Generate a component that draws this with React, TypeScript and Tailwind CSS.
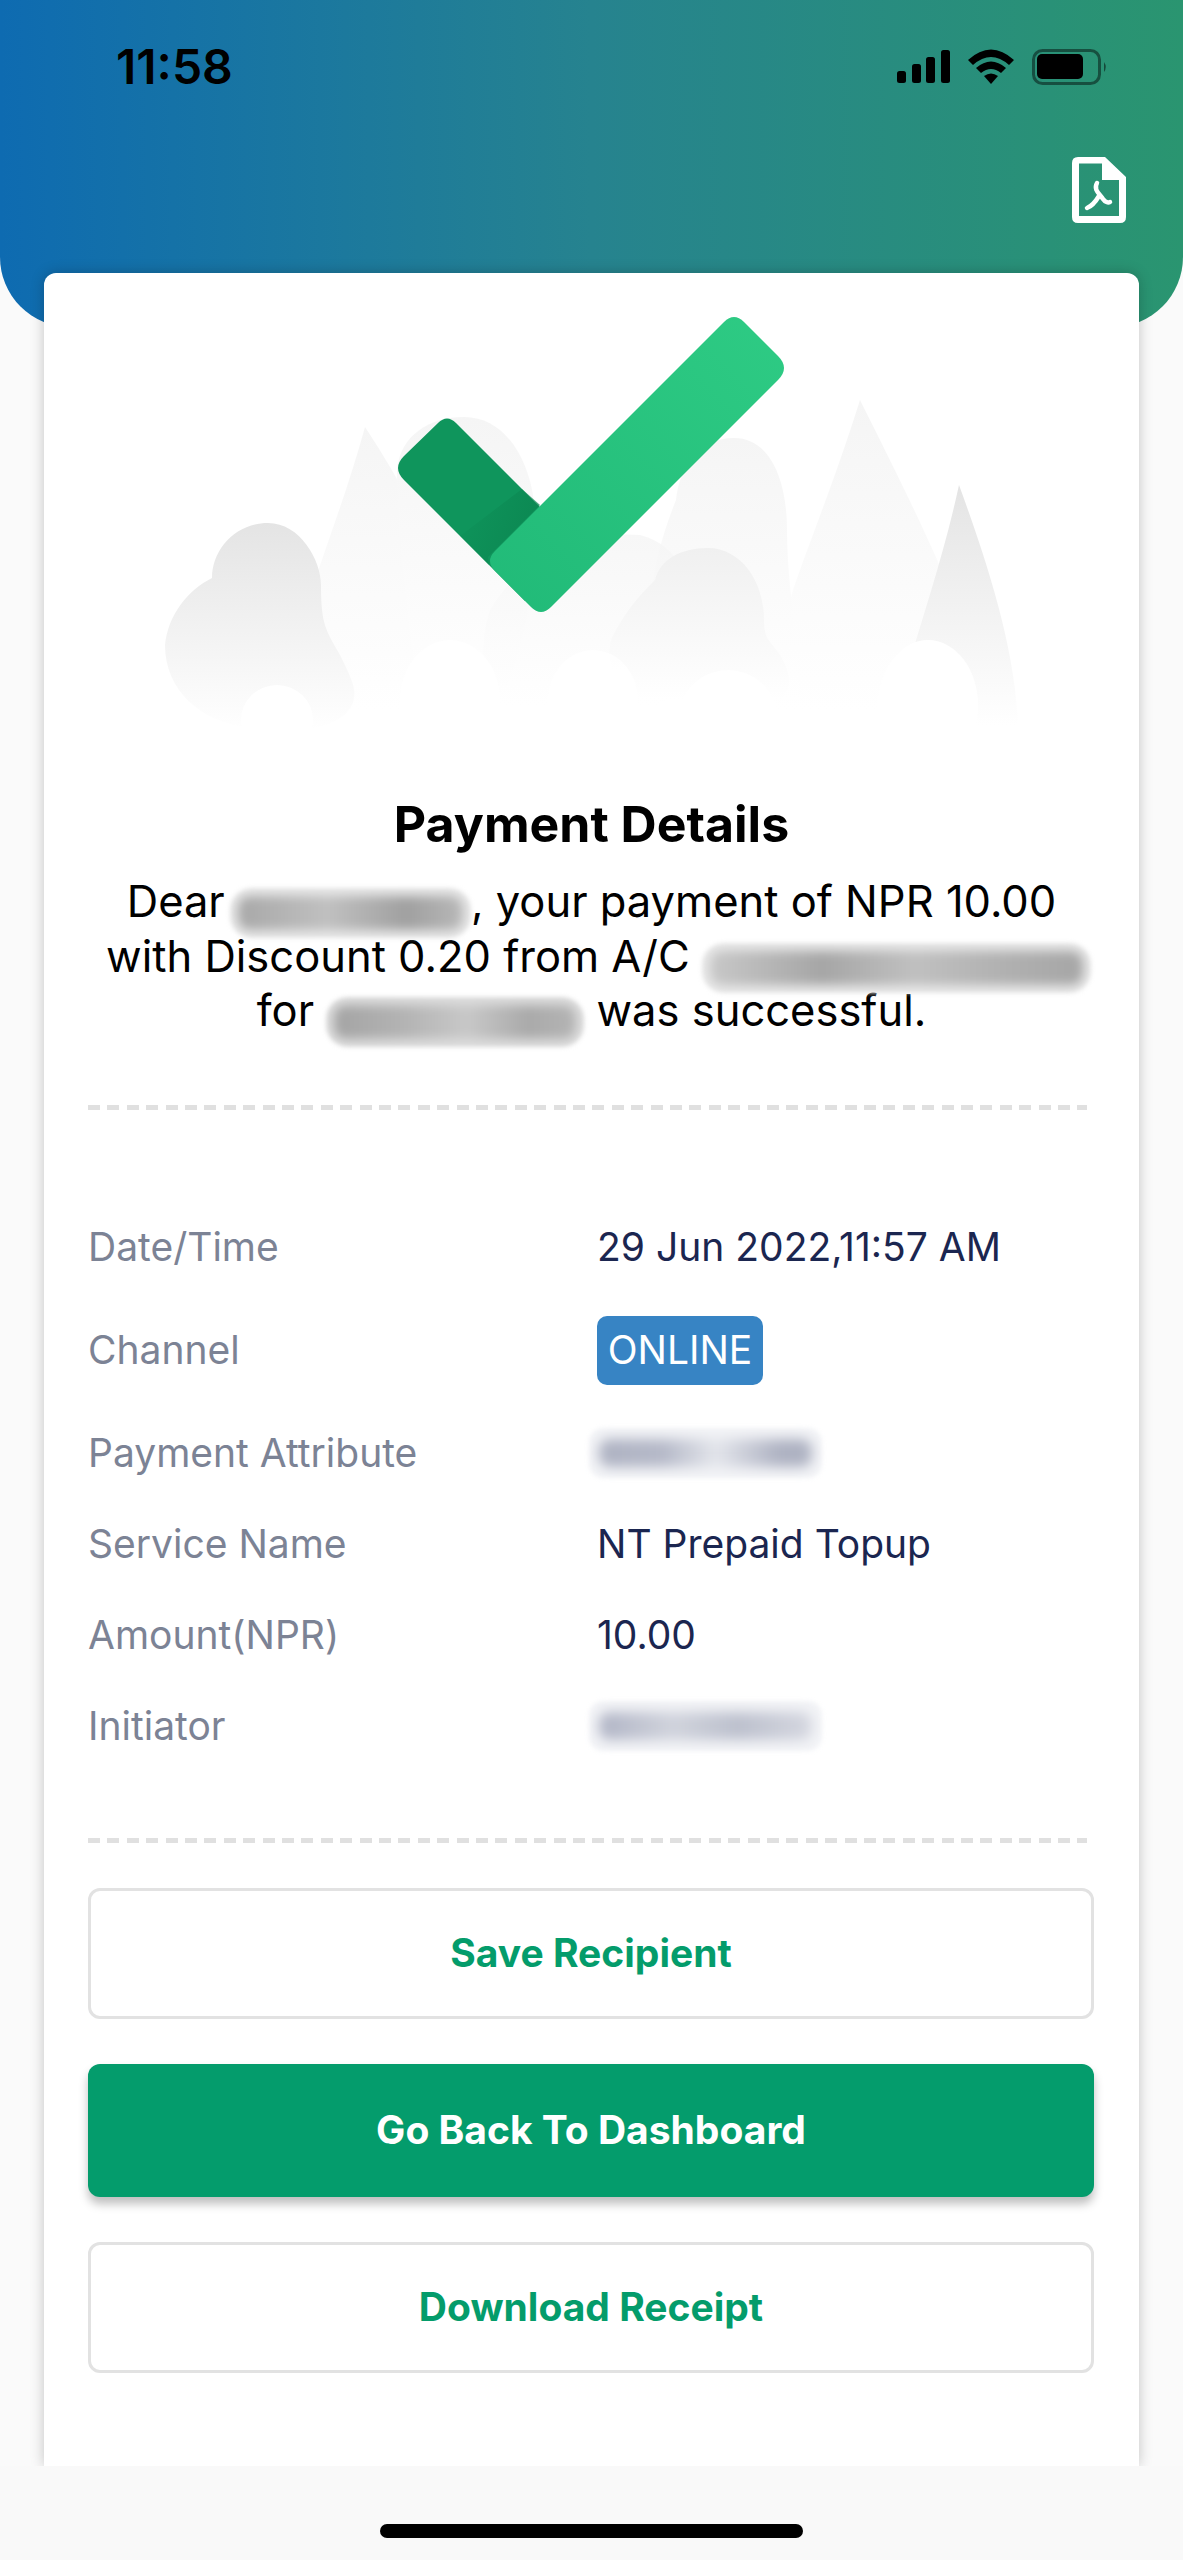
const Redacted = ({ className, band }: { className: string; band: string }) => (
  <span className={`-my-[12px] inline-flex h-[50px] items-center rounded-[22px] px-[8px] align-[-13px] blur-[2px] ${className}`}>
    <span className={`h-[34px] w-full rounded-[12px] blur-[5px] ${band}`} />
  </span>
);

const StatusIcons = () => (
  <svg width="211" height="36" viewBox="897 49 211 36" className="block">
    <rect x="897" y="71" width="9" height="12" rx="2.5" />
    <rect x="912" y="64" width="9" height="19" rx="2.5" />
    <rect x="926" y="57" width="9" height="26" rx="2.5" />
    <rect x="941" y="50" width="9" height="33" rx="2.5" />
    <path d="M968 60 Q991 39 1014 60 L1009 65 Q991 49 973 65 Z" />
    <path d="M976 68 Q991 55 1006 68 L1001 73 Q991 65 981 73 Z" />
    <path d="M984 76 Q991 71 998 76 L991 84 Z" />
    <rect x="1033.5" y="50.5" width="66" height="33" rx="9" fill="none" stroke="#000" strokeOpacity="0.45" strokeWidth="3" />
    <rect x="1037" y="54" width="46" height="25" rx="5" />
    <path d="M1104 62 Q1107.5 67 1104 72 Z" fillOpacity="0.5" />
  </svg>
);

const PdfIcon = () => (
  <svg width="54" height="66" viewBox="1072 157 54 66" className="block">
    <path
      fill="#fff"
      fillRule="evenodd"
      d="M1078 157 H1105 L1126 177 V217 Q1126 223 1120 223 H1078 Q1072 223 1072 217 V163 Q1072 157 1078 157 Z M1079 163.500 V216 H1119 V180 H1102 V163.500 Z"
    />
    <path
      d="M1097 183 C1093 190 1100 194 1103 199 C1105 202 1108 203 1110 202 M1099 196 C1096 201 1092 206 1087 208"
      fill="none"
      stroke="#fff"
      strokeWidth="4.500"
      strokeLinecap="round"
    />
  </svg>
);

const Illustration = () => (
  <svg width="1094" height="500" viewBox="44 273 1094 500" className="block">
    <defs>
      <linearGradient id="fadeDark" x1="0" y1="0" x2="0" y2="1">
        <stop offset="0" stopColor="#e4e4e4" />
        <stop offset="1" stopColor="#ffffff" />
      </linearGradient>
      <linearGradient id="fadeMid" x1="0" y1="0" x2="0" y2="1">
        <stop offset="0" stopColor="#f0f0f0" />
        <stop offset="1" stopColor="#ffffff" />
      </linearGradient>
      <linearGradient id="fadeLight" x1="0" y1="0" x2="0" y2="1">
        <stop offset="0" stopColor="#f5f5f5" />
        <stop offset="1" stopColor="#ffffff" />
      </linearGradient>
      <linearGradient id="longBar" x1="1" y1="0" x2="0" y2="1">
        <stop offset="0" stopColor="#2ecb84" />
        <stop offset="1" stopColor="#21ba78" />
      </linearGradient>
      <linearGradient id="joinShade" x1="0" y1="0" x2="1" y2="0.400">
        <stop offset="0" stopColor="#0b8550" stopOpacity="0" />
        <stop offset="1" stopColor="#0b8550" stopOpacity="0.800" />
      </linearGradient>
    </defs>

    {/* mountains */}
    <path d="M365 427 C345 500 320 560 306 610 C290 650 270 690 260 710 H500 C480 660 440 540 365 427 Z" fill="url(#fadeLight)" />
    <path d="M860 400 C835 480 810 540 793 590 C780 640 770 680 760 710 H990 C970 620 920 520 860 400 Z" fill="url(#fadeLight)" />
    <path d="M959 485 C945 550 925 610 907 670 C900 690 895 710 890 725 H1018 C1015 650 990 570 959 485 Z" fill="url(#fadeDark)" />

    {/* trees */}
    <path d="M397 470 C400 435 430 417 464 417 C510 417 535 470 535 520 C535 600 520 660 500 700 H420 C410 640 397 540 397 470 Z" fill="url(#fadeLight)" />
    <path d="M676 500 C680 465 700 438 734 438 C770 438 787 480 787 530 C787 590 800 650 800 700 H660 C650 640 640 590 676 500 Z" fill="url(#fadeLight)" />
    <path d="M490 610 C520 560 570 530 640 535 C680 545 690 580 690 620 C690 660 680 690 660 705 H500 C480 680 480 640 490 610 Z" fill="url(#fadeLight)" opacity="0.800" />
    <path d="M165 645 C168 615 188 590 212 578 C212 550 235 523 268 523 C300 523 321 560 321 585 C321 625 326 630 340 655 C352 680 358 690 352 705 C340 730 290 735 250 728 C200 722 165 690 165 645 Z" fill="url(#fadeDark)" />
    <path d="M611 640 C625 610 645 590 655 580 C660 560 680 548 708 548 C740 548 764 580 764 620 C764 640 770 640 780 655 C792 675 792 690 780 700 H630 C615 690 606 660 611 640 Z" fill="url(#fadeMid)" />

    {/* white clouds over the base */}
    <ellipse cx="277" cy="720" rx="36" ry="35" fill="#fff" />
    <ellipse cx="450" cy="700" rx="50" ry="60" fill="#fff" opacity="0.800" />
    <ellipse cx="593" cy="700" rx="45" ry="50" fill="#fff" opacity="0.800" />
    <ellipse cx="728" cy="720" rx="50" ry="50" fill="#fff" opacity="0.800" />
    <ellipse cx="928" cy="705" rx="50" ry="65" fill="#fff" />

    {/* check mark */}
    <path d="M438 423 Q447 414 456 423 L560 527 L525 601 L404 480 Q392 468 404 456 Z" fill="#0f955c" />
    <path d="M540 505 L488 557 L489 565 L460 536 L522 489 Z" fill="url(#joinShade)" />
    <path
      d="M724 322 Q734 312 744 322 L778 356 Q790 368 778 380 L551 607 Q541 617 531 607 L495 571 Q485 561 495 551 Z"
      fill="url(#longBar)"
    />
  </svg>
);

const Row = ({ label, tall, children }: { label: string; tall?: boolean; children: React.ReactNode }) => (
  <div className={`flex items-center ${tall ? 'h-[115px]' : 'h-[91px]'}`}>
    <span className="w-[509px] shrink-0 text-[#7c8395]">{label}</span>
    <div className="text-[#1b2650]">{children}</div>
  </div>
);

const Dashes = () => (
  <div className="h-[5px] w-[999px] bg-[repeating-linear-gradient(90deg,#e0e0e0_0,#e0e0e0_12px,transparent_12px,transparent_19.400px)]" />
);

const RowRedacted = ({ band }: { band: string }) => (
  <span className="-ml-[8px] flex h-[50px] w-[233px] items-center rounded-[14px] bg-[#f3f4f7] px-[10px] blur-[2px]">
    <span className={`h-[28px] w-full rounded-[10px] blur-[6px] ${band}`} />
  </span>
);

export default function App() {
  return (
    <div className="flex h-[2560px] flex-col overflow-hidden bg-[#fafafa] font-['Inter',sans-serif]">
      <header className="h-[327px] shrink-0 rounded-b-[70px] bg-[linear-gradient(90deg,#0e6bb1,#26838f_50%,#2a9570)]">
        <div className="flex h-[135px] items-start justify-between pt-[41px] pl-[116px] pr-[75px]">
          <span className="text-[48px] leading-[52px] font-semibold text-black">11:58</span>
          <div className="pt-[8px]">
            <StatusIcons />
          </div>
        </div>
        <div className="flex justify-end pt-[22px] pr-[57px]">
          <PdfIcon />
        </div>
      </header>

      <main className="mx-[44px] -mt-[54px] min-h-0 flex-1 rounded-t-[12px] bg-white shadow-[0_0_14px_rgba(0,0,0,0.22)]">
        <Illustration />
        <div className="px-[44px]">
          <h1 className="mt-[21px] text-center text-[50px] leading-[60px] font-bold text-black">Payment Details</h1>
          <p className="mt-[20px] text-center text-[43.500px] leading-[54.500px] text-black">
            Dear{' '}
            <Redacted
              className="-ml-[7px] w-[241px] bg-[#e8e8e8]"
              band="bg-[linear-gradient(90deg,#a8a8a8,#c0c0c0_40%,#a0a0a0_75%,#b8b8b8)]"
            />
            , your payment of NPR 10.00
            <br />
            <span className="ml-[14px] whitespace-nowrap">
              with Discount 0.20 from A/C{' '}
              <Redacted
                className="w-[389px] bg-[#e8e8e8]"
                band="bg-[linear-gradient(90deg,#c8c8c8,#a6a6a6_30%,#c0c0c0_55%,#b0b0b0_80%,#a6a6a6)]"
              />
            </span>
            <br />
            for{' '}
            <Redacted
              className="w-[258px] bg-[#dedede]"
              band="bg-[linear-gradient(90deg,#a4a4a4,#b4b4b4_30%,#c8c8c8_55%,#aaa_80%,#b4b4b4)]"
            />{' '}
            was successful.
          </p>
          <div className="mt-[67px]">
            <Dashes />
          </div>

          <div className="mt-[92px] text-[39px]">
            <Row label="Date/Time">29 Jun 2022,11:57 AM</Row>
            <Row label="Channel" tall>
              <span className="flex h-[69px] w-[166px] items-center justify-center rounded-[10px] bg-[#3784c4] text-white">
                ONLINE
              </span>
            </Row>
            <Row label="Payment Attribute">
              <RowRedacted band="bg-[linear-gradient(90deg,#aeb2c2,#b5b9c8_30%,#e3e5eb_55%,#aeb2c2_85%)]" />
            </Row>
            <Row label="Service Name">NT Prepaid Topup</Row>
            <Row label="Amount(NPR)">10.00</Row>
            <Row label="Initiator">
              <RowRedacted band="bg-[linear-gradient(90deg,#b0b4c5,#d0d3dc_35%,#bcc0cd_65%,#d5d7e0)]" />
            </Row>
          </div>

          <div className="mt-[66px]">
            <Dashes />
          </div>

          <div className="mt-[45px] flex w-[1006px] flex-col gap-[45px] text-[39px] font-bold">
            <button className="h-[131px] rounded-[12px] border-[3px] border-[#e2e2e2] bg-white text-[#049c6b]">Save Recipient</button>
            <button className="h-[133px] rounded-[12px] bg-[#049c6c] text-white shadow-[0_7px_10px_rgba(0,0,0,0.25)]">Go Back To Dashboard</button>
            <button className="h-[131px] rounded-[12px] border-[3px] border-[#e2e2e2] bg-white text-[#049c6b]">Download Receipt</button>
          </div>
        </div>
      </main>

      <footer className="relative flex h-[94px] shrink-0 justify-center bg-[#f9f9f9] pt-[58px]">
        <div className="h-[14px] w-[423px] rounded-full bg-black" />
      </footer>
    </div>
  );
}
